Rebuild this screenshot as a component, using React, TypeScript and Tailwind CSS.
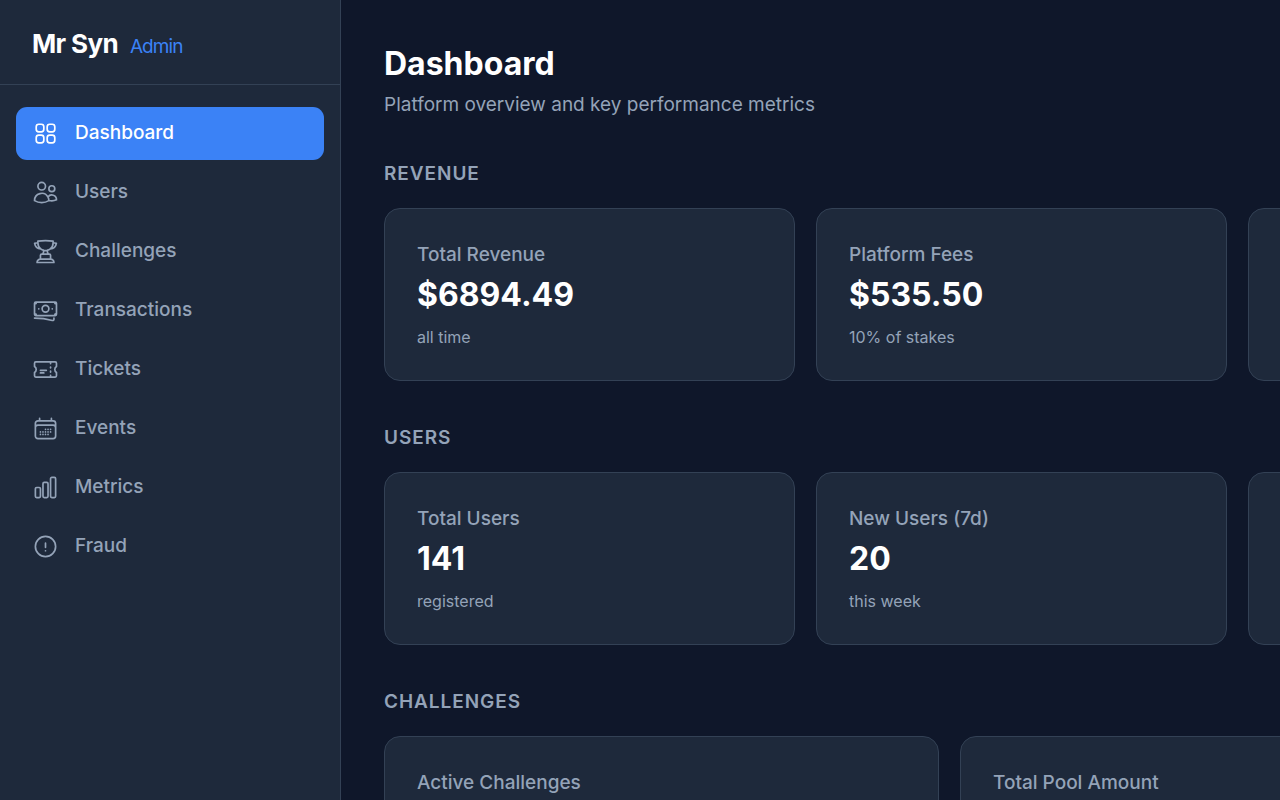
import { ReactNode } from 'react';
import { IconType } from 'react-icons';
import {
  HiOutlineBanknotes,
  HiOutlineCalendarDays,
  HiOutlineChartBar,
  HiOutlineExclamationCircle,
  HiOutlineSquares2X2,
  HiOutlineTicket,
  HiOutlineTrophy,
  HiOutlineUsers
} from 'react-icons/hi2';

const navItems: { label: string; icon: IconType }[] = [
  { label: 'Dashboard', icon: HiOutlineSquares2X2 },
  { label: 'Users', icon: HiOutlineUsers },
  { label: 'Challenges', icon: HiOutlineTrophy },
  { label: 'Transactions', icon: HiOutlineBanknotes },
  { label: 'Tickets', icon: HiOutlineTicket },
  { label: 'Events', icon: HiOutlineCalendarDays },
  { label: 'Metrics', icon: HiOutlineChartBar },
  { label: 'Fraud', icon: HiOutlineExclamationCircle }
];

export default function App() {
  return (
    <div className="flex h-screen overflow-hidden bg-[#0f172a] font-['Inter',sans-serif] text-white">
      <Sidebar />
      <main className="min-w-0 flex-1 overflow-hidden px-[43px] pt-[43px]">
        <h1 className="text-[32px] leading-[42px] font-bold">Dashboard</h1>
        <p className="mt-[6px] text-[19px] leading-[27px] text-[#94a3b8]">
          Platform overview and key performance metrics
        </p>
        <div className="mt-[42px] flex min-w-[1707px] flex-col gap-[43px]">
          <Section title="Revenue">
            <div className="grid grid-cols-4 gap-[21px]">
              <StatCard label="Total Revenue" value="$6894.49" note="all time" />
              <StatCard label="Platform Fees" value="$535.50" note="10% of stakes" />
              <StatCard />
            </div>
          </Section>
          <Section title="Users">
            <div className="grid grid-cols-4 gap-[21px]">
              <StatCard label="Total Users" value="141" note="registered" />
              <StatCard label="New Users (7d)" value="20" note="this week" />
              <StatCard />
            </div>
          </Section>
          <Section title="Challenges">
            <div className="grid grid-cols-3 gap-[21px]">
              <StatCard label="Active Challenges" />
              <StatCard label="Total Pool Amount" />
            </div>
          </Section>
        </div>
      </main>
    </div>
  );
}

function Sidebar() {
  return (
    <aside className="w-[341px] shrink-0 border-r border-[#334155] bg-[#1e293b]">
      <div className="flex h-[85px] items-center border-b border-[#334155] px-8 pt-0.5">
        <div className="flex items-baseline gap-3">
          <span className="text-[26px] font-bold tracking-tight">Mr Syn</span>
          <span className="text-[19px] tracking-tighter text-[#3b82f6]">Admin</span>
        </div>
      </div>
      <nav className="flex flex-col gap-[6px] px-4 py-[22px]">
        {navItems.map(({ label, icon: Icon }, i) => (
          <a
            key={label}
            href="#"
            className={`flex h-[53px] items-center gap-4 rounded-[11px] px-4 text-[19px] font-medium ${
              i === 0 ? 'bg-[#3b82f6] text-white' : 'text-[#94a3b8]'
            }`}
          >
            <Icon className="size-[27px]" />
            {label}
          </a>
        ))}
      </nav>
    </aside>
  );
}

interface SectionProps {
  title: string;
  children: ReactNode;
}

function Section({ title, children }: SectionProps) {
  return (
    <section>
      <h2 className="mb-[21px] text-[19px] leading-[27px] font-semibold tracking-wider text-[#94a3b8] uppercase">
        {title}
      </h2>
      {children}
    </section>
  );
}

interface StatCardProps {
  label?: string;
  value?: string;
  note?: string;
}

function StatCard({ label, value, note }: StatCardProps) {
  return (
    <div className="min-h-[173px] rounded-2xl border border-[#334155] bg-[#1e293b] p-8">
      {label && <p className="text-[19px] leading-[27px] font-medium text-[#94a3b8]">{label}</p>}
      {value && <p className="mt-[5px] text-[32px] leading-[43px] font-bold">{value}</p>}
      {note && <p className="mt-[11px] text-base leading-[21px] text-[#94a3b8]">{note}</p>}
    </div>
  );
}
